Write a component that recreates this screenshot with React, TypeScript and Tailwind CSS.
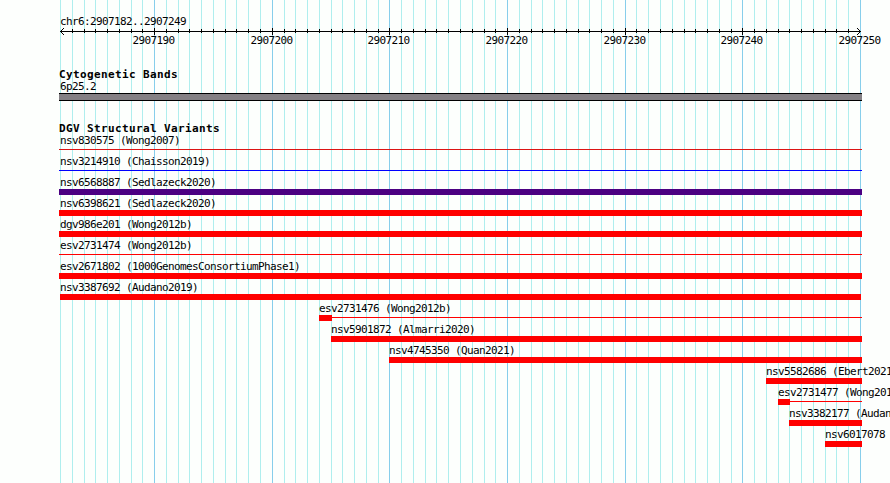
type Variant = {
  label: string;
  start: number;
  end?: number;
  color?: string;
  kind?: "line" | "bar" | "boxed";
  boxWidth?: number;
};

const GRID_START = 60;
const BASE_WIDTH = 800 / 68;

const variants: Variant[] = [
  { label: "nsv830575 (Wong2007)", start: 59, kind: "line", color: "bg-[#dc1414]" },
  { label: "nsv3214910 (Chaisson2019)", start: 59, kind: "line", color: "bg-[#0000ff]" },
  { label: "nsv6568887 (Sedlazeck2020)", start: 59, color: "bg-[#4b0082]" },
  { label: "nsv6398621 (Sedlazeck2020)", start: 59 },
  { label: "dgv986e201 (Wong2012b)", start: 59 },
  { label: "esv2731474 (Wong2012b)", start: 59, kind: "line" },
  { label: "esv2671802 (1000GenomesConsortiumPhase1)", start: 59 },
  { label: "nsv3387692 (Audano2019)", start: 60, end: 861 },
  { label: "esv2731476 (Wong2012b)", start: 319, kind: "boxed", boxWidth: 13 },
  { label: "nsv5901872 (Almarri2020)", start: 331 },
  { label: "nsv4745350 (Quan2021)", start: 389 },
  { label: "nsv5582686 (Ebert2021)", start: 766 },
  { label: "esv2731477 (Wong2012b)", start: 778, kind: "boxed", boxWidth: 12 },
  { label: "nsv3382177 (Audano2019)", start: 789 },
  { label: "nsv6017078", start: 825 },
];

const positions = Array.from({ length: 69 }, (_, i) => ({
  i,
  x: Math.round(GRID_START + i * BASE_WIDTH),
  major: (i + 2) % 10 === 0,
}));

const smallText =
  "block whitespace-pre font-['DejaVu_Sans_Mono',monospace] text-[11px] leading-[12px] tracking-[-0.622px] text-black";
const titleText =
  "block whitespace-pre font-['DejaVu_Sans_Mono',monospace] text-[11px] font-bold leading-[12px] tracking-[0.378px] text-black";

function Grid() {
  return (
    <svg className="absolute inset-0" width="890" height="483" shapeRendering="crispEdges">
      {positions.map(({ i, x, major }) => (
        <rect key={i} x={x} y={0} width={1} height={483} fill={major ? "#87ceeb" : "#afeeee"} />
      ))}
    </svg>
  );
}

function Ruler() {
  return (
    <div className="relative -mt-px h-[32px]">
      <svg className="block" width="890" height="9" shapeRendering="crispEdges">
        <rect x={60} y={4} width={801} height={1} />
        {positions.slice(1, -1).map(({ i, x, major }) => (
          <rect key={i} x={x} y={major ? 1 : 2} width={1} height={major ? 7 : 4} />
        ))}
        <path d="M61 3h1v1h-1zM62 2h1v1h-1zM63 1h1v1h-1zM61 5h1v1h-1zM62 6h1v1h-1zM63 7h1v1h-1z" />
        <path d="M859 3h1v1h-1zM858 2h1v1h-1zM857 1h1v1h-1zM859 5h1v1h-1zM858 6h1v1h-1zM857 7h1v1h-1z" />
      </svg>
      {positions
        .filter((p) => p.major)
        .map(({ i, x }) => (
          <span key={i} className={`absolute top-[8px] ${smallText}`} style={{ left: x - 21.5 }}>
            {2907182 + i}
          </span>
        ))}
    </div>
  );
}

function VariantRow({ label, start, end = 862, color = "bg-[#ff0000]", kind = "bar", boxWidth }: Variant) {
  return (
    <div className="h-[21px]" style={{ paddingLeft: start }}>
      <span className={`${smallText} ${start === 59 ? "pl-px" : ""}`}>{label}</span>
      <div className="flex h-[6px] items-start" style={{ width: end - start }}>
        {kind === "boxed" && <div className="h-[6px] shrink-0 bg-[#ff0000]" style={{ width: boxWidth }} />}
        <div className={`grow ${kind === "bar" ? "h-[6px]" : "mt-[2px] h-px"} ${color}`} />
      </div>
    </div>
  );
}

export default function App() {
  return (
    <div className="relative h-[483px] w-[890px] overflow-hidden bg-[#fdfffd]">
      <Grid />
      <div className="relative pt-[16px]">
        <span className={`pl-[60px] ${smallText}`}>chr6:2907182..2907249</span>
        <Ruler />
        <section className="mt-[10px]">
          <h2 className={`pl-[59px] ${titleText}`}>Cytogenetic Bands</h2>
          <span className={`pl-[60px] ${smallText}`}>6p25.2</span>
          <div className="ml-[59px] h-[8px] w-[803px] border-y border-black bg-[#848084]" />
        </section>
        <section className="mt-[22px]">
          <h2 className={`pl-[59px] ${titleText}`}>DGV Structural Variants</h2>
          {variants.map((v) => (
            <VariantRow key={v.label} {...v} />
          ))}
        </section>
      </div>
    </div>
  );
}
